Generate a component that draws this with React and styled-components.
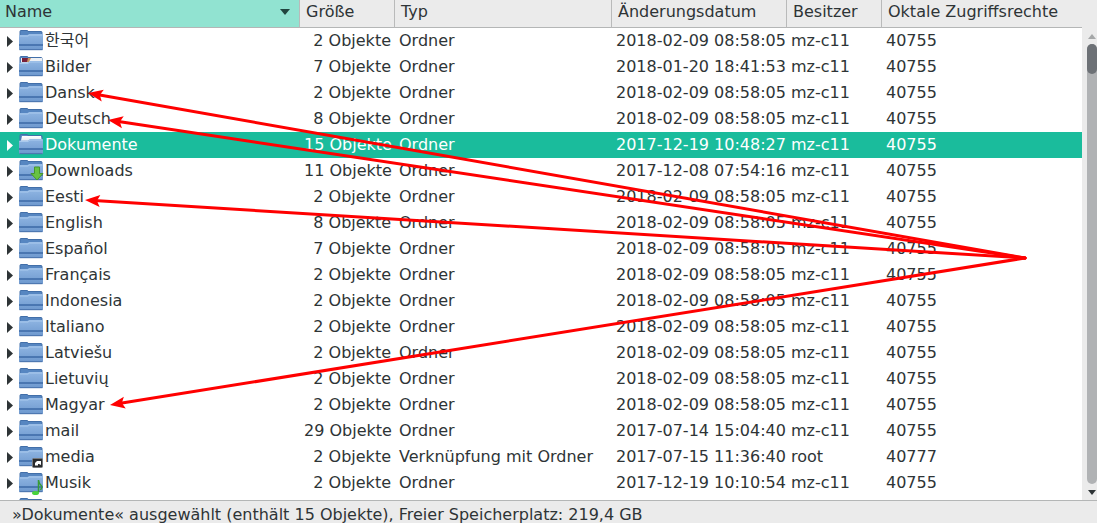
import React, { useState } from "react";
import styled, { createGlobalStyle } from "styled-components";

const GlobalStyle = createGlobalStyle`
  * { box-sizing: border-box; }
  body {
    margin: 0;
    background: #ebebeb;
    color: #2e3436;
    font: 16px/26px "DejaVu Sans", "Noto Sans CJK KR", sans-serif;
  }
  button { font: inherit; color: inherit; border: 0; background: none; padding: 0; }
`;

const Window = styled.main`
  display: flex;
  flex-direction: column;
  height: 100vh;
  overflow: hidden;
`;

const Browser = styled.div`
  position: relative;
  display: flex;
  flex: 1;
  min-height: 0;
  overflow: hidden;
`;

const ListArea = styled.div`
  flex: 1;
  min-width: 0;
  overflow: hidden;
  background: #fff;
`;

const FileTable = styled.table`
  width: 100%;
  table-layout: fixed;
  border-collapse: separate;
  border-spacing: 0;
`;

const Column = styled.col`
  width: ${(p) => (p.$width ? `${p.$width}px` : "auto")};
`;

const HeadCell = styled.th`
  height: 28px;
  padding: 0;
  font-weight: normal;
  background: ${(p) => (p.$sorted ? "#91e3d1" : "#ebebeb")};
  border-bottom: 1px solid #b4b6b6;
  border-right: ${(p) => (p.$last ? "0" : "1px solid #b9baba")};
`;

const HeadButton = styled.button`
  display: flex;
  align-items: center;
  justify-content: space-between;
  width: 100%;
  height: 27px;
  padding: 0 9px 4px ${(p) => (p.$first ? "5px" : "6px")};
  white-space: nowrap;
`;

const Row = styled.tr`
  height: 26px;
  color: ${(p) => (p.$selected ? "#fff" : "inherit")};
  background: ${(p) => (p.$selected ? "#1abc9c" : "transparent")};
`;

const Cell = styled.td`
  height: 26px;
  padding: 0 4px;
  text-align: ${(p) => (p.$right ? "right" : "left")};
  white-space: nowrap;
`;

const NameCell = styled.div`
  display: flex;
  align-items: center;
  height: 26px;
  padding-left: 3px;
`;

const Expander = styled.button`
  display: flex;
  width: 12px;
  height: 26px;
  align-items: center;
`;

const FolderSvg = styled.svg`
  flex: none;
  width: 26px;
  height: 26px;
`;

const SharedGradients = styled.svg`
  display: block;
  width: 0;
  height: 0;
`;

const ScrollTrack = styled.div`
  display: flex;
  flex-direction: column;
  width: 15px;
  padding-top: 28px;
  background: #ebebeb;
`;

const ScrollButton = styled.button`
  display: flex;
  align-items: center;
  justify-content: center;
  height: 16px;
  padding-left: 4px;
`;

const Trough = styled.div`
  flex: 1;
  margin-left: 5px;
  border-radius: 5px;
  background: #b0b2b4;
`;

const Thumb = styled.div`
  height: 30px;
  border-radius: 5px;
  background: #6d7176;
`;

const StatusBar = styled.footer`
  height: 23px;
  padding: 1px 0 0 12px;
  border-top: 1px solid #b4b6b6;
  white-space: nowrap;
  overflow: hidden;
`;

const Annotations = styled.svg`
  position: absolute;
  top: 0;
  left: 0;
  pointer-events: none;
`;

function FolderDefs() {
  return (
    <SharedGradients aria-hidden="true">
      <defs>
        <linearGradient id="front" x1="0" y1="0" x2="0" y2="1">
          <stop offset="0" stopColor="#8fb5e2" />
          <stop offset="1" stopColor="#6d98ce" />
        </linearGradient>
        <linearGradient id="paper" x1="0" y1="0" x2="0" y2="1">
          <stop offset="0" stopColor="#ffffff" />
          <stop offset="1" stopColor="#d5dce8" />
        </linearGradient>
      </defs>
    </SharedGradients>
  );
}

function FolderIcon({ kind }) {
  const open = kind === "documents" || kind === "pictures";
  return (
    <FolderSvg viewBox="0 0 26 26" aria-hidden="true">
      <path d="M1 3.500Q1 2.500 2 2.500h6q1 0 1 1H22q1 0 1 1V10H1z" fill="#5686c1" stroke="#426fa9" />
      {kind === "documents" && <path d="M3 4h19l1 7H1.500z" fill="url(#paper)" />}
      {kind === "pictures" && (
        <g>
          <path d="M2 4h21v6H2z" fill="#edf0f4" />
          <path d="M3 4h7v4H3z" fill="#792039" />
          <path d="M9 4h3l-2 4H8z" fill="#c99460" />
        </g>
      )}
      <path
        d={
          open
            ? "M0 9.500q0-1 1-1h8l2-1.500h12q1 0 1 1v13q0 1-1 1H1q-1 0-1-1z"
            : "M0 8q0-1 1-1h7.500L10 6h13q1 0 1 1v14q0 1-1 1H1q-1 0-1-1z"
        }
        fill="url(#front)"
      />
      <path
        d={open ? "M.5 9.500h8.500l2-1.500h12.500" : "M.5 8H9l1.500-1h13"}
        fill="none"
        stroke="#a9c9ed"
      />
      <path d="M0 17h24" stroke="#3b68a6" strokeWidth="1.500" />
      <path d="M.5 21.700h23" stroke="#4771ab" />
      {kind === "downloads" && (
        <path d="M15.500 9.500h5v6.500h3.500L18 22.500l-6-6.500h3.500z" fill="#68c244" stroke="#46962f" transform="translate(0 -.5)" />
      )}
      {kind === "link" && (
        <g>
          <rect x="13.500" y="14.500" width="10" height="9" rx="1" fill="#292b2d" stroke="#77797c" />
          <path d="M16 21.500V19l2-2h4v4l-2-1h-1v1.500z" fill="#fff" />
        </g>
      )}
      {kind === "music" && (
        <g>
          <path d="M19.500 22.500V10q0 3 3 6 1 2-1 4" fill="none" stroke="#379b35" strokeWidth="1.500" />
          <ellipse cx="16.500" cy="23" rx="3.500" ry="2" fill="#48d33b" />
        </g>
      )}
    </FolderSvg>
  );
}

const columns = ["Name", "Größe", "Typ", "Änderungsdatum", "Besitzer", "Oktale Zugriffsrechte"];
const widths = [300, 95, 217, 175, 95, null];
const std = "2018-02-09 08:58:05";
const files = [
  { name: "한국어" },
  { name: "Bilder", count: 7, date: "2018-01-20 18:41:53", kind: "pictures" },
  { name: "Dansk" },
  { name: "Deutsch", count: 8 },
  { name: "Dokumente", count: 15, date: "2017-12-19 10:48:27", kind: "documents" },
  { name: "Downloads", count: 11, date: "2017-12-08 07:54:16", kind: "downloads" },
  { name: "Eesti" },
  { name: "English", count: 8 },
  { name: "Español", count: 7 },
  { name: "Français" },
  { name: "Indonesia" },
  { name: "Italiano" },
  { name: "Latviešu" },
  { name: "Lietuvių" },
  { name: "Magyar" },
  { name: "mail", count: 29, date: "2017-07-14 15:04:40" },
  { name: "media", type: "Verknüpfung mit Ordner", date: "2017-07-15 11:36:40", owner: "root", mode: "40777", kind: "link" },
  { name: "Musik", date: "2017-12-19 10:10:54", kind: "music" },
];

const origin = [1025, 258];
const targets = [[88, 93], [108, 120], [85, 200], [110, 405]];

function Arrow({ x, y }) {
  const [ox, oy] = origin;
  const angle = (Math.atan2(oy - y, ox - x) * 180) / Math.PI;
  const length = Math.hypot(ox - x, oy - y);
  return (
    <g transform={`translate(${x} ${y}) rotate(${angle})`} fill="#f00">
      <path d={`M9 0H${length}`} stroke="#f00" strokeWidth="3" strokeLinecap="round" />
      <path d="M0 0 15-6 12 0 15 6z" />
    </g>
  );
}

export default function App() {
  const [selected, setSelected] = useState("Dokumente");
  return (
    <Window>
      <GlobalStyle />
      <FolderDefs />
      <Browser>
        <ListArea>
          <FileTable>
            <colgroup>
              {widths.map((w, i) => <Column key={columns[i]} $width={w} />)}
            </colgroup>
            <thead>
              <tr>
                {columns.map((label, i) => (
                  <HeadCell key={label} $sorted={i === 0} $last={i === 5} aria-sort={i === 0 ? "ascending" : undefined}>
                    <HeadButton $first={i === 0}>
                      {label}
                      {i === 0 && <svg width="10" height="6" aria-hidden="true"><path d="M0 0h10L5 6z" fill="#21453f" /></svg>}
                    </HeadButton>
                  </HeadCell>
                ))}
              </tr>
            </thead>
            <tbody>
              {files.map((f) => (
                <Row key={f.name} $selected={selected === f.name} onClick={() => setSelected(f.name)}>
                  <Cell>
                    <NameCell>
                      <Expander aria-label={f.name}>
                        <svg width="6" height="12" aria-hidden="true"><path d="M0 1 6 6.500 0 12z" fill="currentColor" /></svg>
                      </Expander>
                      <FolderIcon kind={f.kind} />
                      {f.name}
                    </NameCell>
                  </Cell>
                  <Cell $right>{f.count || 2} Objekte</Cell>
                  <Cell>{f.type || "Ordner"}</Cell>
                  <Cell>{f.date || std}</Cell>
                  <Cell>{f.owner || "mz-c11"}</Cell>
                  <Cell>{f.mode || "40755"}</Cell>
                </Row>
              ))}
              <Row>
                <Cell colSpan={6}>
                  <NameCell>
                    <Expander as="span" />
                    <FolderIcon />
                  </NameCell>
                </Cell>
              </Row>
            </tbody>
          </FileTable>
        </ListArea>
        <ScrollTrack>
          <ScrollButton aria-label="Nach oben">
            <svg width="8" height="5" aria-hidden="true"><path d="M0 5h8L4 0z" fill="#a5a7a8" /></svg>
          </ScrollButton>
          <Trough><Thumb /></Trough>
          <ScrollButton aria-label="Nach unten">
            <svg width="8" height="5" aria-hidden="true"><path d="M0 0h8L4 5z" fill="#2e3436" /></svg>
          </ScrollButton>
        </ScrollTrack>
        <Annotations width="1097" height="500" aria-hidden="true">
          {targets.map(([x, y]) => <Arrow key={y} x={x} y={y} />)}
        </Annotations>
      </Browser>
      <StatusBar>»Dokumente« ausgewählt (enthält 15 Objekte), Freier Speicherplatz: 219,4 GB</StatusBar>
    </Window>
  );
}
